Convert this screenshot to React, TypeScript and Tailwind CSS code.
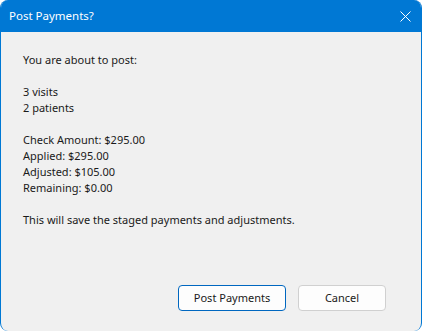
export default function App() {
  const font = { fontFamily: '"Segoe UI", "Noto Sans", sans-serif' };
  return (
    <div
      className="w-[422px] h-[331px] flex flex-col rounded-lg overflow-hidden border-x border-[#0078d4] bg-[#f0f0f0] text-[11px] text-[#1a1a1a]"
      style={font}
    >
      <div className="h-8 bg-[#0078d4] flex items-center justify-between pl-[8px] pr-[10px] text-white shrink-0">
        <span className="text-[11.5px]">Post Payments?</span>
        <svg width="11" height="11" viewBox="0 0 11 11" className="text-white">
          <path d="M0.5 0.5 L10.5 10.5 M10.5 0.5 L0.5 10.5" stroke="currentColor" strokeWidth="1" fill="none" />
        </svg>
      </div>

      <div className="flex-1 flex flex-col pl-[22px] pt-5 leading-4">
        <p>You are about to post:</p>
        <p className="mt-4">3 visits</p>
        <p>2 patients</p>
        <p className="mt-4">Check Amount: $295.00</p>
        <p>Applied: $295.00</p>
        <p>Adjusted: $105.00</p>
        <p>Remaining: $0.00</p>
        <p className="mt-4">This will save the staged payments and adjustments.</p>

        <div className="mt-auto flex justify-end gap-3 pr-[35px] pb-5">
          <button className="w-[108px] h-[26px] rounded border border-[#0067c0] bg-[#fdfdfd] text-[11px]">
            Post Payments
          </button>
          <button className="w-[88px] h-[26px] rounded border border-[#d0d0d0] bg-[#fdfdfd] text-[11px]">
            Cancel
          </button>
        </div>
      </div>
    </div>
  );
}
